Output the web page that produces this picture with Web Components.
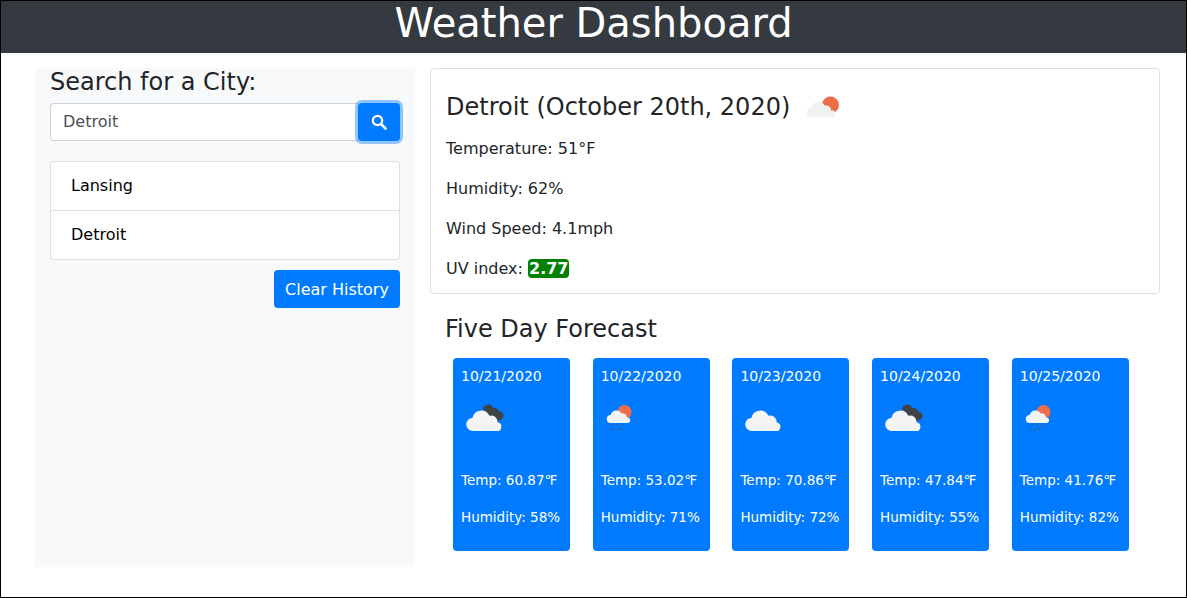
<!DOCTYPE html>
<html lang="en">
<head>
<meta charset="utf-8">
<title>Weather Dashboard</title>
<style>
    html, body { margin: 0; padding: 0; background: #fff; }
    body { font-family: "DejaVu Sans", "Open Sans", sans-serif; color: #212529; }
</style>
</head>
<body>
<weather-app></weather-app>

<script>
const CLOUD = 'M8 27a6.5 6.5 0 0 1-.6-13 9 9 0 0 1 17-2.2 6.6 6.6 0 0 1 8.400 6.700A4.300 4.300 0 0 1 31.500 27z';

const ICONS = {
    // grey cloud in front of a red sun
    'sun-cloud': `
        <svg width="36" height="28" viewBox="0 0 36 28">
            <circle cx="24.500" cy="12" r="8.500" fill="#ee6e4a"/>
            <path fill="#f1f1f1" stroke="#fff" stroke-width="0" d="M6 24.500a5 5 0 0 1-.5-10 7 7 0 0 1 13-2 5 5 0 0 1 6.500 5 3.600 3.600 0 0 1 2 7z"/>
        </svg>`,
    // white cloud in front of a dark one
    'dark-cloud': `
        <svg width="40" height="32" viewBox="0 0 40 32">
            <path fill="#3f4347" d="M18 7a5.200 5.200 0 0 1 10-1 4.600 4.600 0 0 1 6 3.500 4.200 4.200 0 0 1 2 8l-6 3z"/>
            <path fill="#f3f4f6" d="${CLOUD}" transform="translate(0 2)"/>
        </svg>`,
    // plain white cloud
    'cloud': `
        <svg width="40" height="32" viewBox="0 0 40 32">
            <path fill="#f3f4f6" d="${CLOUD}" transform="translate(0 2)"/>
        </svg>`,
    // cloud, sun and rain drops
    'rain': `
        <svg width="32" height="32" viewBox="0 0 32 32">
            <circle cx="19.500" cy="10" r="7" fill="#ee6e4a"/>
            <path fill="#f3f4f6" d="M6 21a4 4 0 0 1-.4-8 6 6 0 0 1 11-1.500 4.300 4.300 0 0 1 5.400 4 2.800 2.800 0 0 1 1 5.500z"/>
            <path stroke="#4a5560" stroke-width="1.300" fill="none" d="M8.500 22l-.5 1.500M13 23l-.5 1.500M18 22l-.5 1.500M7 26l-.5 1.500M11.500 27l-.5 1.500M15.500 26l-.5 1.500"/>
        </svg>`
};

class AppHeader extends HTMLElement {
    constructor() {
        super();
        this.attachShadow({ mode: 'open' });
        this.shadowRoot.innerHTML = `
            <style>
                :host { display: block; background: #343a40; height: 52px; }
                h1 {
                    margin: 0;
                    color: #fff;
                    font-size: 40px;
                    font-weight: 400;
                    line-height: 44px;
                    text-align: center;
                }
            </style>
            <h1><slot></slot></h1>
        `;
    }
}

class CitySearch extends HTMLElement {
    constructor() {
        super();
        this.attachShadow({ mode: 'open' });
        this.shadowRoot.innerHTML = `
            <style>
                :host { display: block; }
                h2 {
                    margin: 0 0 6px;
                    font-size: 24px;
                    font-weight: 400;
                    line-height: 29px;
                }
                .group { display: flex; height: 38px; }
                .field {
                    flex: 1;
                    box-sizing: border-box;
                    padding: 0 12px;
                    border: 1px solid #ced4da;
                    border-right: 0;
                    border-radius: 4px 0 0 4px;
                    background: #fff;
                    color: #495057;
                    font-size: 16px;
                    line-height: 36px;
                }
                button {
                    width: 42px;
                    padding: 0;
                    border: 0;
                    border-radius: 4px;
                    background: #007bff;
                    box-shadow: 0 0 0 3px rgba(38,143,255,.5);
                    display: flex;
                    align-items: center;
                    justify-content: center;
                }
            </style>
            <h2>Search for a City:</h2>
            <div class="group">
                <div class="field"><slot></slot></div>
                <button aria-label="Search">
                    <svg width="16" height="16" viewBox="0 0 16 16" fill="none" stroke="#fff">
                        <circle cx="6.500" cy="6.500" r="4.700" stroke-width="2.200"/>
                        <path d="M10.200 10.200l4.300 4.300" stroke-width="2.600" stroke-linecap="round"/>
                    </svg>
                </button>
            </div>
        `;
    }
}

class HistoryList extends HTMLElement {
    constructor() {
        super();
        this.attachShadow({ mode: 'open' });
        this.shadowRoot.innerHTML = `
            <style>
                :host {
                    display: block;
                    margin-top: 20px;
                    background: #fff;
                    border: 1px solid rgba(0,0,0,.125);
                    border-radius: 4px;
                }
            </style>
            <slot></slot>
        `;
    }
}

class HistoryItem extends HTMLElement {
    constructor() {
        super();
        this.attachShadow({ mode: 'open' });
        this.shadowRoot.innerHTML = `
            <style>
                :host {
                    display: block;
                    padding: 0 20px;
                    height: 48px;
                    line-height: 48px;
                    color: #000;
                    font-size: 16px;
                }
                :host(:not(:last-child)) { border-bottom: 1px solid rgba(0,0,0,.125); }
            </style>
            <slot></slot>
        `;
    }
}

class ClearButton extends HTMLElement {
    constructor() {
        super();
        this.attachShadow({ mode: 'open' });
        this.shadowRoot.innerHTML = `
            <style>
                :host { display: flex; justify-content: flex-end; margin-top: 10px; }
                button {
                    height: 38px;
                    width: 126px;
                    padding: 0;
                    border: 0;
                    border-radius: 4px;
                    background: #007bff;
                    color: #fff;
                    font: 16px "DejaVu Sans", sans-serif;
                }
            </style>
            <button><slot></slot></button>
        `;
    }
}

class SidePanel extends HTMLElement {
    constructor() {
        super();
        this.attachShadow({ mode: 'open' });
        this.shadowRoot.innerHTML = `
            <style>
                :host {
                    display: block;
                    box-sizing: border-box;
                    width: 380px;
                    height: 499px;
                    padding: 0 15px;
                    background: #f8f9fa;
                }
            </style>
            <slot></slot>
        `;
    }
}

class CurrentWeather extends HTMLElement {
    static get observedAttributes() { return ['icon']; }

    constructor() {
        super();
        this.attachShadow({ mode: 'open' });
        this.shadowRoot.innerHTML = `
            <style>
                :host {
                    display: block;
                    box-sizing: border-box;
                    height: 226px;
                    padding: 20px 15px 0;
                    border: 1px solid rgba(0,0,0,.125);
                    border-radius: 4px;
                    font-size: 16px;
                }
                h3 {
                    display: flex;
                    align-items: center;
                    gap: 16px;
                    margin: 0 0 12px;
                    height: 36px;
                    font-size: 24px;
                    font-weight: 400;
                }
                h3 svg { display: block; }
            </style>
            <h3><slot name="title"></slot><span id="icon"></span></h3>
            <slot></slot>
        `;
    }

    connectedCallback() {
        this.shadowRoot.getElementById('icon').innerHTML = ICONS[this.getAttribute('icon')] || '';
    }
}

class StatLine extends HTMLElement {
    constructor() {
        super();
        this.attachShadow({ mode: 'open' });
        this.shadowRoot.innerHTML = `
            <style>
                :host { display: block; height: 40px; line-height: 24px; }
            </style>
            <slot></slot>
        `;
    }
}

class UvBadge extends HTMLElement {
    constructor() {
        super();
        this.attachShadow({ mode: 'open' });
        this.shadowRoot.innerHTML = `
            <style>
                :host {
                    display: inline-block;
                    background: green;
                    color: #fff;
                    font-weight: 700;
                    border-radius: 4px;
                    line-height: 19px;
                    padding: 0 1px;
                }
            </style>
            <slot></slot>
        `;
    }
}

class ForecastCard extends HTMLElement {
    constructor() {
        super();
        this.attachShadow({ mode: 'open' });
        this.shadowRoot.innerHTML = `
            <style>
                :host {
                    display: block;
                    box-sizing: border-box;
                    width: 117px;
                    height: 193px;
                    padding: 8px 0 0 8px;
                    background: #007bff;
                    border-radius: 4px;
                    color: #fff;
                    font-size: 14px;
                }
                .date { height: 36px; line-height: 20px; }
                .icon { height: 50px; padding-left: 4px; }
                .icon svg { display: block; }
                .line { height: 37px; line-height: 20px; font-size: 13.500px; }
            </style>
            <div class="date">${this.getAttribute('date')}</div>
            <div class="icon">${ICONS[this.getAttribute('icon')] || ''}</div>
            <div class="line" style="margin-top: 18px">Temp: ${this.getAttribute('temp')}℉</div>
            <div class="line">Humidity: ${this.getAttribute('humidity')}%</div>
        `;
    }
}

class ForecastSection extends HTMLElement {
    constructor() {
        super();
        this.attachShadow({ mode: 'open' });
        this.shadowRoot.innerHTML = `
            <style>
                :host { display: block; padding-left: 15px; }
                h3 {
                    margin: 20px 0 14px;
                    height: 30px;
                    font-size: 24px;
                    line-height: 30px;
                    font-weight: 400;
                }
                .row { display: flex; gap: 22.700px; padding-left: 8px; }
            </style>
            <h3>Five Day Forecast</h3>
            <div class="row"><slot></slot></div>
        `;
    }
}

class WeatherApp extends HTMLElement {
    constructor() {
        super();
        this.attachShadow({ mode: 'open' });
        this.shadowRoot.innerHTML = `
            <style>
                :host {
                    display: block;
                    box-sizing: border-box;
                    width: 1187px;
                    height: 598px;
                    border: 1px solid #000;
                    overflow: hidden;
                }
                main {
                    display: flex;
                    gap: 15px;
                    padding: 15px 26px 0 34px;
                }
                .right { flex: 1; min-width: 0; }
            </style>
            <app-header>Weather Dashboard</app-header>
            <main>
                <side-panel>
                    <city-search>Detroit</city-search>
                    <history-list>
                        <history-item>Lansing</history-item>
                        <history-item>Detroit</history-item>
                    </history-list>
                    <clear-button>Clear History</clear-button>
                </side-panel>
                <div class="right">
                    <current-weather icon="sun-cloud">
                        <span slot="title">Detroit (October 20th, 2020)</span>
                        <stat-line>Temperature: 51°F</stat-line>
                        <stat-line>Humidity: 62%</stat-line>
                        <stat-line>Wind Speed: 4.1mph</stat-line>
                        <stat-line>UV index: <uv-badge>2.77</uv-badge></stat-line>
                    </current-weather>
                    <forecast-section>
                        <forecast-card date="10/21/2020" icon="dark-cloud" temp="60.87" humidity="58"></forecast-card>
                        <forecast-card date="10/22/2020" icon="rain" temp="53.02" humidity="71"></forecast-card>
                        <forecast-card date="10/23/2020" icon="cloud" temp="70.86" humidity="72"></forecast-card>
                        <forecast-card date="10/24/2020" icon="dark-cloud" temp="47.84" humidity="55"></forecast-card>
                        <forecast-card date="10/25/2020" icon="rain" temp="41.76" humidity="82"></forecast-card>
                    </forecast-section>
                </div>
            </main>
        `;
    }
}

customElements.define('app-header', AppHeader);
customElements.define('city-search', CitySearch);
customElements.define('history-list', HistoryList);
customElements.define('history-item', HistoryItem);
customElements.define('clear-button', ClearButton);
customElements.define('side-panel', SidePanel);
customElements.define('current-weather', CurrentWeather);
customElements.define('stat-line', StatLine);
customElements.define('uv-badge', UvBadge);
customElements.define('forecast-card', ForecastCard);
customElements.define('forecast-section', ForecastSection);
customElements.define('weather-app', WeatherApp);
</script>
</body>
</html>
